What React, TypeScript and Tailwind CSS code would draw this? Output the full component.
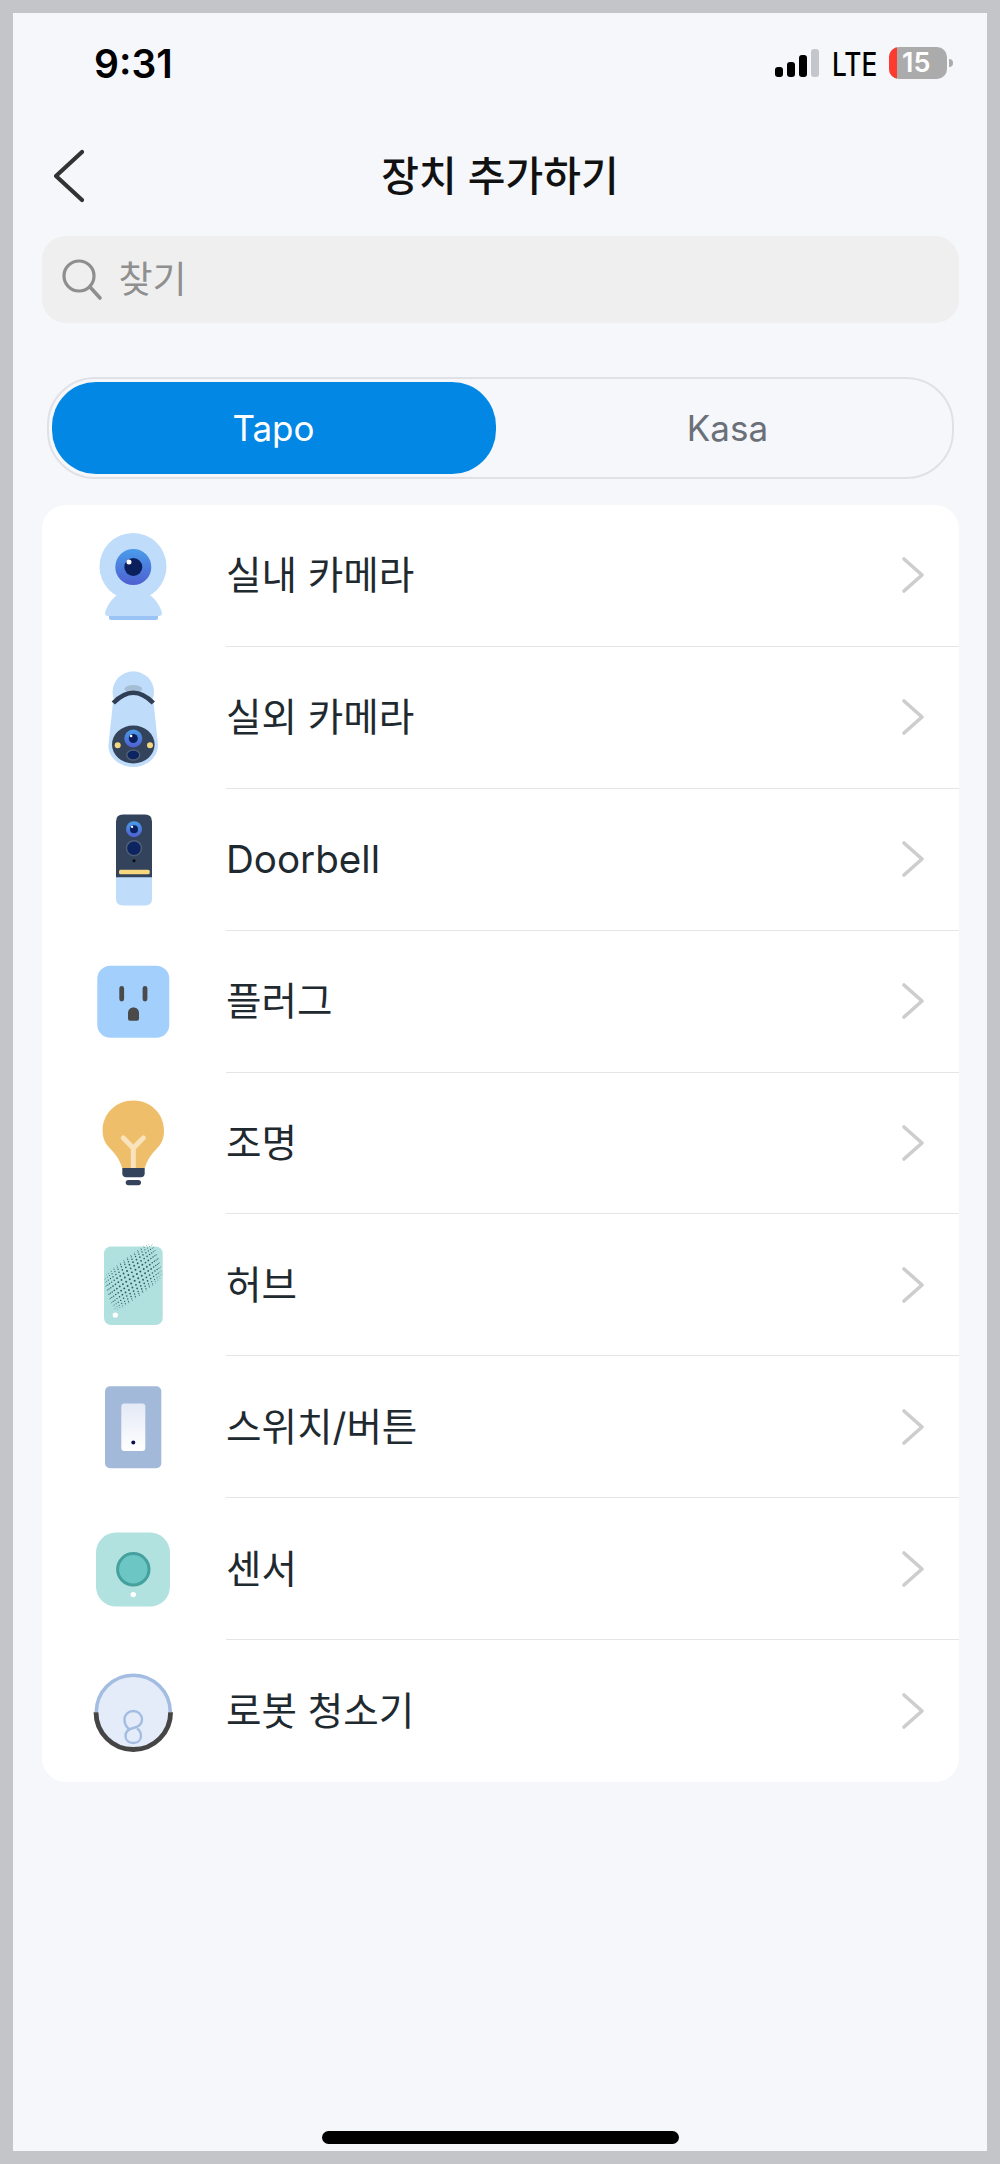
import type { ReactNode } from "react";

const Svg = ({ children, dy = 0 }: { children: ReactNode; dy?: number }) => (
  <svg viewBox={`0 ${dy} 100 120`} className="w-[100px] h-[120px] shrink-0">
    {children}
  </svg>
);

const Eye = ({ x, y, r, id }: { x: number; y: number; r: number; id: string }) => (
  <>
    <defs>
      <linearGradient id={id} x1="0" y1="0" x2="0" y2="1">
        <stop offset="0" stopColor="#4a9cea" />
        <stop offset="1" stopColor="#4f5fd0" />
      </linearGradient>
    </defs>
    <circle cx={x} cy={y} r={r} fill={`url(#${id})`} />
    <circle cx={x} cy={y} r={r / 2} fill="#0a1f5c" />
    <circle cx={x - r * 0.24} cy={y - r * 0.28} r={r * 0.14} fill="#fff" />
  </>
);

const IndoorCam = () => (
  <Svg>
    <circle cx="50" cy="50.5" r="33.5" fill="#bfdcfb" />
    <path d="M22 97C24 89 30 81 37 77L64 77C71 81 77 89 79 97Q79 100 76 100L25 100Q22 100 22 97Z" fill="#bfdcfb" />
    <path d="M26 100L75 100L75 102Q75 104 73 104L28 104Q26 104 26 102Z" fill="#9cc3f5" />
    <Eye x={50.3} y={51} r={18} id="eye1" />
  </Svg>
);

const OutdoorCam = () => (
  <Svg>
    <circle cx="50.3" cy="34" r="20.7" fill="#bfdcfb" />
    <path d="M30 44Q50.3 25 70.5 44L75 87C75 100 63 109 50.3 109C37 109 25 100 25.5 87Z" fill="#bfdcfb" />
    <ellipse cx="50.3" cy="31" rx="9" ry="4" fill="#a6bdd6" />
    <path d="M30.3 45Q50.3 24.5 70.3 45" fill="none" stroke="#2f3e55" strokeWidth="4.6" />
    <ellipse cx="50.3" cy="86.5" rx="21.3" ry="19" fill="#33435c" />
    <Eye x={50.3} y={80.5} r={9} id="eye2" />
    <circle cx="34.7" cy="87.3" r="3" fill="#f7d77e" />
    <circle cx="67" cy="87.3" r="3" fill="#f7d77e" />
    <ellipse cx="50.3" cy="97" rx="6.5" ry="5" fill="#0c2560" stroke="#4f5e75" strokeWidth="1.5" />
  </Svg>
);

const Doorbell = () => (
  <Svg dy={0.5}>
    <path d="M33 77H69V99Q69 106 62 106H40Q33 106 33 99Z" fill="#bfdcfb" />
    <path d="M40 15H62Q69 15 69 22V77.7H33V22Q33 15 40 15Z" fill="#33435c" />
    <Eye x={51} y={29.7} r={8} id="eye3" />
    <circle cx="51" cy="48.7" r="7.5" fill="#0c2560" stroke="#4f5e75" strokeWidth="1.5" />
    <circle cx="51" cy="61.3" r="1.5" fill="#0a0a0a" />
    <rect x="36" y="70.3" width="30.7" height="4.4" rx="1.5" fill="#f7d77e" />
  </Svg>
);

const Plug = () => (
  <Svg dy={1.4}>
    <rect x="14.3" y="25.2" width="72" height="72" rx="13" fill="#a3cffd" />
    <rect x="36.3" y="45.5" width="4.8" height="15.3" rx="2.4" fill="#4a4a4a" />
    <rect x="59.6" y="45.5" width="4.8" height="15.3" rx="2.4" fill="#4a4a4a" />
    <path d="M45 72.3C45 69 47.5 66.8 50.5 66.8C53.5 66.8 56 69 56 72.3V78Q56 80.2 54 80.2H47Q45 80.2 45 78Z" fill="#4a4a4a" />
  </Svg>
);

const Bulb = () => (
  <Svg dy={1.4}>
    <path d="M50.3 18C33 18 19.6 31 19.6 48C19.6 57 23 62 28 67C33 72 37 78 39.3 85.5H61.7C64 78 68 72 73 67C78 62 81 57 81 48C81 31 67.5 18 50.3 18Z" fill="#efbe6a" />
    <path d="M40.3 55.3L50.3 65.5L60.3 55.3M50.3 65.5V85.5" fill="none" stroke="#f9e3bd" strokeWidth="5" strokeLinecap="round" />
    <path d="M39.3 85.3H61.7V90.7Q61.7 94.7 57.7 94.7H43.3Q39.3 94.7 39.3 90.7Z" fill="#33435c" />
    <rect x="42.7" y="97.3" width="15.3" height="5.4" rx="2.7" fill="#33435c" />
  </Svg>
);

function hubDots() {
  const dots: { x: number; y: number; r: number }[] = [];
  const nu = 11;
  const nv = 7;
  const a = (-36 * Math.PI) / 180;
  const skew = (18 * Math.PI) / 180;
  for (let i = -nu; i <= nu; i++) {
    for (let j = -nv; j <= nv; j++) {
      const u = i / nu;
      const v = j / nv;
      const d = u * u + v * v;
      if (d > 1) continue;
      const px = 31 * Math.sin((u * Math.PI) / 2);
      const py = 20 * Math.sin((v * Math.PI) / 2);
      dots.push({
        x: 50.3 + px * Math.cos(a) - py * Math.sin(a + skew),
        y: 53 + px * Math.sin(a) + py * Math.cos(a + skew),
        r: 0.28 + 0.72 * (1 - d),
      });
    }
  }
  return dots;
}

const Hub = () => (
  <Svg dy={1.4}>
    <rect x="21" y="22.8" width="58.7" height="78.7" rx="7" fill="#b0e1df" />
    {hubDots().map((d, i) => (
      <circle key={i} cx={d.x} cy={d.y} r={d.r} fill="#2c5a62" />
    ))}
    <circle cx="32.3" cy="91.5" r="2.7" fill="#fff" />
  </Svg>
);

const SwitchIcon = () => (
  <Svg dy={1.4}>
    <defs>
      <linearGradient id="sw" x1="0" y1="0" x2="0" y2="1">
        <stop offset="0" stopColor="#e4e9f6" />
        <stop offset="1" stopColor="#ffffff" />
      </linearGradient>
    </defs>
    <rect x="22" y="20.7" width="56.3" height="82" rx="5" fill="#a3b9da" />
    <rect x="38.3" y="38" width="24" height="47.3" rx="3" fill="url(#sw)" />
    <circle cx="50.3" cy="77" r="2" fill="#0a1050" />
  </Svg>
);

const Sensor = () => (
  <Svg dy={1.4}>
    <rect x="13" y="25" width="74" height="74" rx="20" fill="#b2e2df" />
    <circle cx="50.3" cy="61.7" r="15.7" fill="#6cc6c4" stroke="#45a09e" strokeWidth="3" />
    <circle cx="50.3" cy="87" r="2.7" fill="#fff" />
  </Svg>
);

const Robot = () => (
  <Svg>
    <circle cx="50.3" cy="61.2" r="37" fill="#e5ecf9" />
    <path d="M13.3 61.2A37 37 0 0 1 87.3 61.2" fill="none" stroke="#a3bde2" strokeWidth="3.6" />
    <path d="M13 61.2A37.3 37.3 0 0 0 87.6 61.2" fill="none" stroke="#454545" strokeWidth="4.8" />
    <path d="M46 78C42 75 41.5 72 41.5 68.5C41.5 63.5 45.5 60 50.3 60C55 60 59 63.5 59 68.5C59 74 54.5 76 50.3 77C46 78 42.5 80.5 42.5 85C42.5 89.5 46 92 50.3 92C54.5 92 58 89.5 58 85C58 81.5 56.5 79 54 77.5" fill="none" stroke="#a3bde2" strokeWidth="2.4" />
  </Svg>
);

const rows = [
  { label: "실내 카메라", icon: <IndoorCam /> },
  { label: "실외 카메라", icon: <OutdoorCam /> },
  { label: "Doorbell", icon: <Doorbell /> },
  { label: "플러그", icon: <Plug /> },
  { label: "조명", icon: <Bulb /> },
  { label: "허브", icon: <Hub /> },
  { label: "스위치/버튼", icon: <SwitchIcon /> },
  { label: "센서", icon: <Sensor /> },
  { label: "로봇 청소기", icon: <Robot /> },
];

function StatusBar() {
  return (
    <div className="h-[102px] flex items-start justify-between pt-[30px] pl-[81px] pr-[34px] text-black">
      <span className="text-[39px] leading-[42px] font-semibold">9:31</span>
      <div className="flex items-center h-[42px] mt-[-1px]">
        <svg viewBox="0 0 44 28" className="w-[44px] h-[28px]">
          <rect x="0" y="18" width="8" height="10" rx="3" fill="#000" />
          <rect x="12" y="13" width="8" height="15" rx="3" fill="#000" />
          <rect x="24" y="6" width="8" height="22" rx="3" fill="#000" />
          <rect x="36" y="0" width="8" height="28" rx="3" fill="#c4c6cc" />
        </svg>
        <span className="ml-[13px] w-[44px] mt-[3px] text-[32px] leading-[42px] font-medium origin-left scale-x-[0.82] whitespace-nowrap">LTE</span>
        <div className="relative ml-[13px] w-[58px] h-[32px] rounded-[10px] bg-[#ababab] overflow-hidden flex items-center pl-[13px]">
          <div className="absolute left-0 top-0 bottom-0 w-[8px] bg-[#ff3b30]" />
          <span className="text-[27px] leading-[32px] font-semibold text-white">15</span>
        </div>
        <div className="ml-[2px] w-[4px] h-[8px] rounded-r-full bg-[#ababab]" />
      </div>
    </div>
  );
}

export default function App() {
  return (
    <div className="w-[1000px] h-[2164px] bg-[#c4c5c8] p-[13px] font-['Inter','Noto_Sans_CJK_KR',sans-serif]">
      <div className="h-full bg-[#f5f7fb] flex flex-col">
        <StatusBar />

        <div className="h-[121px] flex items-center relative px-[41px]">
          <svg viewBox="0 0 30 54" className="w-[30px] h-[54px]">
            <path d="M28 3L2 27L28 51" fill="none" stroke="#333" strokeWidth="4.2" strokeLinecap="round" strokeLinejoin="round" />
          </svg>
          <h1 className="absolute inset-x-0 text-center text-[41px] leading-[54px] font-medium text-[#111]">장치 추가하기</h1>
        </div>

        <div className="mx-[28.5px] h-[87px] rounded-[24px] bg-[#efefef] flex items-center pl-[19px] gap-[16px]">
          <svg viewBox="0 0 42 42" className="w-[42px] h-[42px]">
            <circle cx="18" cy="17" r="15" fill="none" stroke="#8e8e8e" strokeWidth="3.2" />
            <path d="M29 28L39 39" fill="none" stroke="#8e8e8e" strokeWidth="3.6" strokeLinecap="round" />
          </svg>
          <span className="text-[37px] leading-[50px] text-[#8f8f8f]">찾기</span>
        </div>

        <div className="mx-[33.5px] mt-[54px] h-[101.5px] rounded-[48px] border-2 border-[#dfe1e6] pl-[3px] pr-[2px] pt-[3px] flex">
          <div className="w-[444px] h-[92px] rounded-[44px] bg-[#0288e4] text-white text-[35px] flex items-center justify-center">Tapo</div>
          <div className="flex-1 h-[92px] pl-[10px] text-[#6b7078] text-[35px] flex items-center justify-center">Kasa</div>
        </div>

        <div className="mx-[28.5px] mt-[26.5px] rounded-[24px] bg-white flex flex-col">
          {rows.map((row, i) => (
            <div key={row.label} className="h-[141.9px] flex items-center pl-[41.5px]">
              {row.icon}
              <div className={i < rows.length - 1 ? "ml-[43px] flex-1 h-full flex items-center justify-between pr-[34px] border-b border-[#e3e5e8]" : "ml-[43px] flex-1 h-full flex items-center justify-between pr-[34px]"}>
                <span className="text-[38.6px] leading-[52px] text-[#1f2a30]">{row.label}</span>
                <svg viewBox="0 0 24 38" className="w-[24px] h-[38px]">
                  <path d="M3 3L21 19L3 35" fill="none" stroke="#cdcdcd" strokeWidth="3.6" strokeLinecap="round" strokeLinejoin="round" />
                </svg>
              </div>
            </div>
          ))}
        </div>

        <div className="mt-auto mb-[7px] mx-auto w-[357px] h-[13px] rounded-full bg-black" />
      </div>
    </div>
  );
}
